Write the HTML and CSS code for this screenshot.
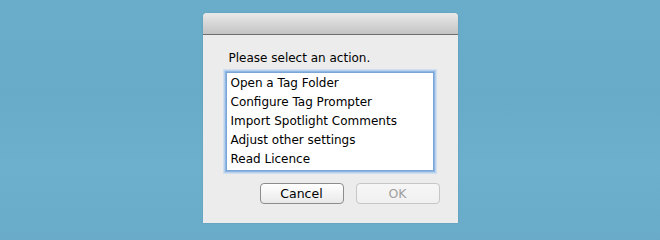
FILE: index.html
```html
<!DOCTYPE html>
<html>
<head>
<meta charset="utf-8">
<link rel="stylesheet" href="styles.css">
</head>
<body>
<div class="desktop">
  <div class="dialog">
    <div class="titlebar"></div>
    <div class="content">
      <div class="prompt">Please select an action.</div>
      <div class="listbox">
        <div class="item">Open a Tag Folder</div>
        <div class="item">Configure Tag Prompter</div>
        <div class="item">Import Spotlight Comments</div>
        <div class="item">Adjust other settings</div>
        <div class="item">Read Licence</div>
      </div>
      <div class="buttons">
        <button class="btn">Cancel</button>
        <button class="btn disabled">OK</button>
      </div>
    </div>
  </div>
</div>
</body>
</html>
```
FILE: styles.css
```css
html, body {
  margin: 0;
  padding: 0;
}
body {
  width: 660px;
  height: 240px;
  overflow: hidden;
  background: linear-gradient(180deg, #69adca 0%, #68abc8 40%, #6cb0cd 70%, #69abc9 100%);
  font-family: "DejaVu Sans", "Liberation Sans", sans-serif;
  font-size: 12px;
  color: #000;
}
.desktop {
  display: flex;
  justify-content: center;
  padding-top: 13px;
}
.dialog {
  width: 255px;
  height: 210px;
  background: #ececec;
  border-radius: 4px 4px 0 0;
  display: flex;
  flex-direction: column;
  box-shadow: 0 0 2px rgba(0,0,0,0.15);
}
.titlebar {
  height: 21px;
  border-radius: 4px 4px 0 0;
  background: linear-gradient(180deg, #e9e9e9 0%, #d6d6d6 50%, #c4c4c4 100%);
  border-bottom: 1px solid #6e6e6e;
}
.content {
  padding: 15px 0 0 23px;
  display: flex;
  flex-direction: column;
}
.prompt {
  padding-left: 3px;
  line-height: 16px;
  height: 16px;
}
.listbox {
  margin-top: 6px;
  background: #fff;
  border: 1px solid #7aa5d6;
  box-shadow: 0 0 0 1px #8fb6e2, 0 0 0 2px #b6d0ee, 0 0 0 3px rgba(182,208,238,0.5);
  padding-top: 1px;
  padding-left: 4px;
  box-sizing: border-box;
  width: 208px;
  height: 99px;
}
.item {
  line-height: 19px;
  height: 19px;
  white-space: nowrap;
}
.buttons {
  display: flex;
  gap: 12px;
  margin-top: 12px;
  padding-left: 34px;
}
.btn {
  width: 84px;
  height: 21px;
  font-family: inherit;
  font-size: 12.5px;
  background: linear-gradient(180deg, #ffffff 0%, #f4f4f4 50%, #e9e9e9 100%);
  border: 1px solid #8d8d8d;
  border-radius: 4px;
  padding: 0;
  color: #000;
  line-height: 19px;
}
.btn.disabled {
  color: #a0a0a0;
  border-color: #c6c6c6;
  background: linear-gradient(180deg, #f6f6f6 0%, #f0f0f0 100%);
}
```
